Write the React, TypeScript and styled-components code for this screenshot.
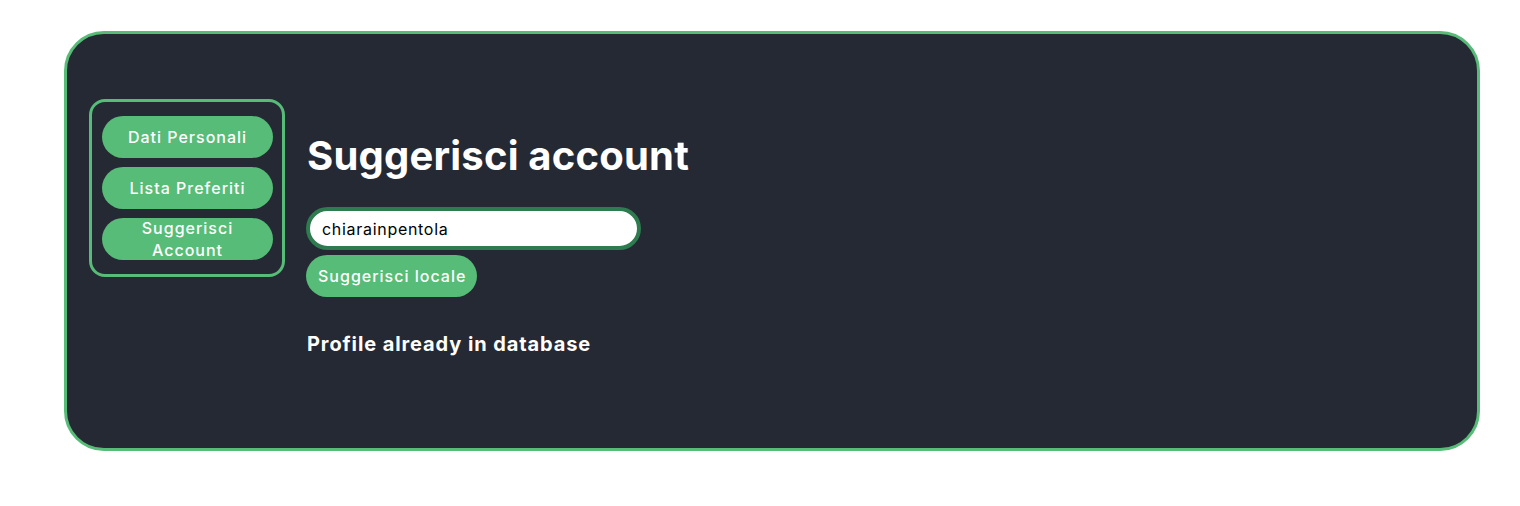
import React from "react";
import styled, { createGlobalStyle } from "styled-components";

const Global = createGlobalStyle`
  html, body { margin: 0; padding: 0; background: #ffffff; }
  body { font-family: Inter, "Noto Sans", sans-serif; }
  * { box-sizing: border-box; }
`;

const Page = styled.div`
  padding: 31px 40px 55px 64px;
  width: 1520px;
`;

const Card = styled.div`
  width: 1416px;
  height: 420px;
  background: #252933;
  border: 3px solid #56bc77;
  border-radius: 40px;
  padding: 65px 22px 0 22px;
  display: flex;
  align-items: flex-start;
  gap: 21px;
`;

const Sidebar = styled.nav`
  width: 196px;
  border: 3px solid #56bc77;
  border-radius: 16px;
  padding: 14px 9px 14px 10px;
  display: flex;
  flex-direction: column;
  gap: 9px;
`;

const PillButton = styled.button<{ $compact?: boolean }>`
  width: ${(p) => (p.$compact ? "auto" : "100%")};
  height: 42px;
  border: none;
  border-radius: 21px;
  background: #56bc77;
  color: #ffffff;
  font-family: Inter, "Noto Sans", sans-serif;
  font-size: 16px;
  font-weight: 500;
  letter-spacing: 1px;
  line-height: 22px;
  padding: ${(p) => (p.$compact ? "0 11px 0 12px" : "0 12px")};
  white-space: ${(p) => (p.$compact ? "nowrap" : "normal")};
  display: flex;
  align-items: center;
  justify-content: center;
  text-align: center;
  cursor: pointer;
`;

const Main = styled.main`
  display: flex;
  flex-direction: column;
  align-items: flex-start;
  padding-top: 29px;
`;

const Title = styled.h1`
  margin: 0 0 0 1px;
  font-size: 40px;
  font-weight: 700;
  letter-spacing: 0.2px;
  line-height: 56px;
  color: #ffffff;
`;

const Input = styled.input`
  margin-top: 23px;
  width: 335px;
  height: 43px;
  border: 4px solid #2e7b4f;
  border-radius: 22px;
  background: #ffffff;
  padding: 0 12px;
  font-family: Inter, "Noto Sans", sans-serif;
  font-size: 16px;
  letter-spacing: 0.7px;
  color: #000000;
  outline: none;
`;

const ActionRow = styled.div`
  margin-top: 5px;
  display: flex;
`;

const Message = styled.h3`
  margin: 34px 0 0 1px;
  font-size: 20px;
  font-weight: 700;
  letter-spacing: 0.9px;
  line-height: 26px;
  color: #ffffff;
`;

export default function App() {
  return (
    <>
      <Global />
      <Page>
        <Card>
          <Sidebar>
            <PillButton>Dati Personali</PillButton>
            <PillButton>Lista Preferiti</PillButton>
            <PillButton>Suggerisci Account</PillButton>
          </Sidebar>
          <Main>
            <Title>Suggerisci account</Title>
            <Input defaultValue="chiarainpentola" />
            <ActionRow>
              <PillButton $compact>Suggerisci locale</PillButton>
            </ActionRow>
            <Message>Profile already in database</Message>
          </Main>
        </Card>
      </Page>
    </>
  );
}
